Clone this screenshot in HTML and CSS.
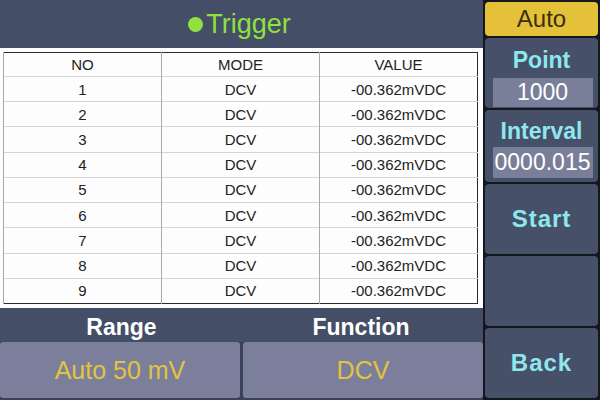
FILE: index.html
```html
<!DOCTYPE html>
<html>
<head>
<meta charset="utf-8">
<link rel="stylesheet" href="styles.css">
</head>
<body>
<div class="screen">
  <div class="main">
    <div class="title"><span class="dot"></span>Trigger</div>
    <div class="sheet">
      <table class="grid">
        <thead>
          <tr><th>NO</th><th>MODE</th><th>VALUE</th></tr>
        </thead>
        <tbody>
          <tr><td>1</td><td>DCV</td><td>-00.362mVDC</td></tr>
          <tr><td>2</td><td>DCV</td><td>-00.362mVDC</td></tr>
          <tr><td>3</td><td>DCV</td><td>-00.362mVDC</td></tr>
          <tr><td>4</td><td>DCV</td><td>-00.362mVDC</td></tr>
          <tr><td>5</td><td>DCV</td><td>-00.362mVDC</td></tr>
          <tr><td>6</td><td>DCV</td><td>-00.362mVDC</td></tr>
          <tr><td>7</td><td>DCV</td><td>-00.362mVDC</td></tr>
          <tr><td>8</td><td>DCV</td><td>-00.362mVDC</td></tr>
          <tr><td>9</td><td>DCV</td><td>-00.362mVDC</td></tr>
        </tbody>
      </table>
    </div>
    <div class="labels">
      <div class="label">Range</div>
      <div class="label">Function</div>
    </div>
    <div class="values">
      <div class="val">Auto 50 mV</div>
      <div class="val">DCV</div>
    </div>
  </div>
  <div class="side">
    <div class="btn auto">Auto</div>
    <div class="btn field">
      <div class="fname">Point</div>
      <div class="fval">1000</div>
    </div>
    <div class="btn field interval">
      <div class="fname">Interval</div>
      <div class="fval">0000.015</div>
    </div>
    <div class="btn action">Start</div>
    <div class="btn action"></div>
    <div class="btn action">Back</div>
  </div>
</div>
</body>
</html>
```

FILE: styles.css
```css
html, body {
  margin: 0;
  padding: 0;
}
body {
  width: 600px;
  height: 400px;
  overflow: hidden;
  background: #444e67;
  font-family: "Liberation Sans", Arial, sans-serif;
}
.screen {
  display: grid;
  grid-template-columns: 483px 117px;
  width: 600px;
  height: 400px;
}
.main {
  display: grid;
  grid-template-rows: 48px 260px 34px 58px;
  background: #444e67;
}
.title {
  display: flex;
  align-items: center;
  justify-content: center;
  gap: 3px;
  color: #8fe140;
  font-size: 27px;
  padding-right: 4px;
}
.dot {
  width: 15px;
  height: 15px;
  border-radius: 50%;
  background: #8fe140;
}
.sheet {
  background: #fdfdfd;
  padding: 4px 5px 4px 3px;
  overflow: hidden;
}
.grid {
  width: 100%;
  height: 100%;
  border-collapse: collapse;
  border: 1px solid #2a2a2a;
  table-layout: fixed;
}
.grid th, .grid td {
  font-weight: normal;
  font-size: 15px;
  color: #222222;
  text-align: center;
  padding: 0;
  height: 23px;
  line-height: 17px;
  border-top: 1px solid #d4d4d4;
  border-left: 1px solid #a8a8a8;
}
.grid th {
  border-top: none;
}
.labels {
  display: grid;
  grid-template-columns: 243px 240px;
  align-items: center;
}
.label {
  text-align: center;
  color: #ffffff;
  font-weight: bold;
  font-size: 23px;
  padding-top: 4px;
}
.label + .label {
  padding-right: 4px;
}
.values {
  display: grid;
  grid-template-columns: 240px 240px;
  column-gap: 3px;
  padding-bottom: 2px;
  background: #3a4259;
}
.val {
  display: flex;
  align-items: center;
  justify-content: center;
  background: #7b7f9c;
  border-radius: 3px;
  color: #e2c43e;
  font-size: 25px;
}
.side {
  display: flex;
  flex-direction: column;
  gap: 2px;
  padding: 2px 2px 2px 2px;
  background: #14171f;
}
.btn {
  border-radius: 4px;
  background: #465069;
  display: flex;
  align-items: center;
  justify-content: center;
  color: #8fe7ee;
  font-weight: bold;
}
.auto {
  height: 34px;
  background: #e5c13a;
  color: #3a2e12;
  font-weight: normal;
  font-size: 24px;
}
.field {
  height: 70px;
  flex-direction: column;
  justify-content: flex-start;
}
.interval {
  height: 72px;
}
.fname {
  font-size: 23px;
  margin-top: 9px;
  line-height: 26px;
}
.fval {
  margin-top: 5px;
  width: 100px;
  height: 29px;
  background: #7a7f99;
  color: #ffffff;
  font-weight: normal;
  font-size: 23px;
  line-height: 29px;
  text-align: center;
  margin-left: 2px;
}
.interval .fname {
  margin-top: 8px;
}
.interval .fval {
  height: 31px;
  line-height: 31px;
  margin-top: 3px;
}
.action {
  height: 70px;
  font-size: 24px;
  letter-spacing: 1px;
}
```
